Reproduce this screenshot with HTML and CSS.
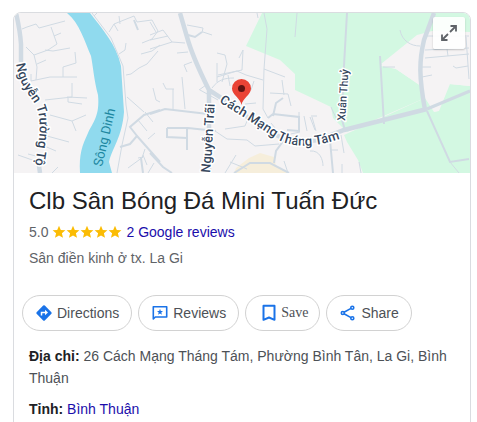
FILE: index.html
```
<!DOCTYPE html>
<html lang="vi">
<head>
    <meta charset="UTF-8">
    <meta name="viewport" content="width=device-width, initial-scale=1.0">
    <title>Clb Sân Bóng Đá Mini Tuấn Đức</title>
    <link rel="stylesheet" href="styles.css">
</head>
<body>
    <div class="card">
        <div class="map">
            <svg class="map-img" viewBox="14 13 456 160" preserveAspectRatio="xMidYMid slice" role="img" aria-label="Map">
                <rect x="14" y="13" width="456" height="160" fill="#f5f3f4"/>
                <!-- parks -->
                <g fill="#d3f8e2">
                    <path d="M262 13H470V36H430L417 48 383 63 381 66 396 69 421 86 425 98 347 132 333 118 331 107 310 97 295 90V74L280 60 246 46Z"/>
                    <path d="M344 135L425 98 436 112 449 84 470 86V173H363L358 160 347 142Z"/>
                </g>
                <path d="M421 86L396 69 381 64 417 35 432 31 470 32V86L450 84 439 111 434 112 425 98Z" fill="#f5f3f4"/>
                <path d="M234 173L236 168 249 158 260 153 274 157 276 166 288 173Z" fill="#f6eedb"/>
                <!-- river -->
                <path d="M67 13C80 24 84 40 91 56C93 66 94 80 98 95C100 116 93 122 88 133C82 146 79 154 80 173H112L109 162C112 148 122 138 124 112L121 66C116 44 103 30 90 13Z" fill="#90daee"/>
                <!-- small streets -->
                <g class="street">
                    <path d="M22 29L27 27 36 24 39 28 50 25 65 21M51 27L57 44 48 50 34 55 26 47M54 36L61 33M45 50L53 51 70 48M34 55L37 67 36 80M37 64L46 60M31 74V81L50 77 77 77M63 77V67L76 63 75 52M72 83V97L45 100M67 97L87 98M68 98V102L82 104M50 115L72 121 86 115M72 121L76 131M47 136L69 142M42 145L56 151M28 154L40 157M18 155L38 162M52 173L58 167"/>
                    <path d="M92 13L111 38 123 66 126 105 128 118 122 145 117 173M97 13L94 16M109 32L114 24 134 16 137 22 152 20 158 31 152 39 142 43M114 24L118 31M119 16L120 24M126 43L125 50 119 54M126 75L131 74 139 68 147 64 158 51M141 54L152 51 160 45M127 97L144 112M145 112L153 122M138 120L147 131M148 139L155 133M153 88L156 100 160 102M128 168L143 157 138 158M148 173L154 163M142 158L145 149M143 155L147 165"/>
                    <path d="M150 35L163 30 172 42 185 43M150 49L172 42M150 40L168 36M150 22L156 32M187 25L203 28 202 33M203 32L212 35M177 53L188 52M187 72L184 65 192 62M199 90L206 85M212 88C218 80 224 78 234 78M217 53L225 55 227 64 222 82M218 75L242 70 243 50M217 82V63M217 77L237 71 246 75 263 80M230 86L228 75M254 81L251 90M243 50L239 58M257 13L258 18M264 13L267 29 264 69 263 109 268 118M264 69L285 77M297 13L295 37M173 89V110M163 83L166 89 174 89M182 77L185 109M200 90L218 100M245 104L256 103M225 129L245 126 249 116M215 131L227 139 247 140 255 146 279 144M225 173L236 155M270 93L288 94 291 106M282 80L284 95M271 123L279 133M281 136L300 132M299 118V112M304 116L307 131M310 117L315 130M230 162L247 169M288 173L284 161"/>
                    <path d="M400 30C402 41 411 46 420 46M425 50L446 49 469 48M425 58L469 54M425 36H469M447 49L448 56M422 67H431M422 77L432 75M453 66L456 68 468 66M466 37L469 79M383 67H395M331 107L336 118M341 135L344 153M311 116H317M312 117L316 131M330 150H338M342 164V173M310 151C320 150 323 160 323 166M361 173L359 162M450 162L459 173"/>
                </g>
                <!-- medium streets -->
                <g class="street mid">
                    <path d="M160 110L144 115 130 127 137 136 130 144 120 147M137 136L160 162M141 158L143 173M134 20L138 30"/>
                    <path d="M150 114L165 109 208 114M167 128L188 128 216 131M167 128V137L187 138M187 128V150M188 35L195 37 202 32M150 153L163 167 172 173M273 116L276 103 283 98M268 118L273 114 299 117V131L287 130M274 163L276 151 284 140M234 173L250 163 270 163 289 173"/>
                    <path d="M380 56L384 124M347 13L343 83 342 120 345 130M427 111L450 162 469 159M330 140L333 173"/>
                </g>
                <!-- main roads -->
                <g class="road">
                    <path d="M16 13C18 22 20 30 21 44V62M38 158L40 173"/>
                    <path d="M180 13L187 37C192 55 199 70 209 90V173M209 90L220 97 250 119C276 137 290 145 318 140L344 130 427 109M434 13L424 40C419 61 419 77 425 110"/>
                    <path class="thin" d="M427 109L470 91"/>
                </g>
                <!-- street names -->
                <defs>
                    <path id="p1" d="M16 64C19 84 28 93 35 104C43 118 39 140 35 165"/>
                    <path id="p2" d="M102 167L116 107"/>
                    <path id="p3" d="M210 173L212 150Q213 130 215 100"/>
                    <path id="p4" d="M219 102L248 120 272 136Q298 155 345 137"/>
                    <path id="p5" d="M345 121L349 64"/>
                </defs>
                <g class="label">
                    <text><textPath href="#p1">Nguyễn Trường Tộ</textPath></text>
                    <text class="water"><textPath href="#p2">Sông Dinh</textPath></text>
                    <text><textPath href="#p3">Nguyễn Trãi</textPath></text>
                    <text><textPath href="#p4">Cách Mạng Tháng Tám</textPath></text>
                    <text class="minor"><textPath href="#p5">Xuân Thuỷ</textPath></text>
                </g>
                <!-- pin -->
                <path d="M241.500 105C240.500 98 232 95 232 88.500A9.500 9.500 0 0 1 251 88.500C251 95 242.500 98 241.500 105Z" fill="#ea4335"/>
                <circle cx="241.500" cy="88.500" r="3.500" fill="#5f1311"/>
            </svg>
            <button class="expand" aria-label="Expand map">
                <svg width="18" height="18" viewBox="0 0 18 18" fill="none" stroke="#5f6368" stroke-width="1.800">
                    <path d="M10.500 2H16V7.500M16 2L10 8M2 10.500V16H7.500M2 16L8 10"/>
                </svg>
            </button>
        </div>

        <div class="info">
            <h2>Clb Sân Bóng Đá Mini Tuấn Đức</h2>
            <div class="rating">
                <span>5.0</span>
                <svg class="stars" width="70" height="14" viewBox="0 0 70 14" fill="#fbbc04" role="img" aria-label="5 stars">
                    <defs><path id="star" d="M7 .8L8.800 5 13.400 5.300 9.900 8.300 11 12.800 7 10.400 3 12.800 4.100 8.300 .6 5.300 5.200 5Z"/></defs>
                    <use href="#star"/>
                    <use href="#star" x="14"/>
                    <use href="#star" x="28"/>
                    <use href="#star" x="42"/>
                    <use href="#star" x="56"/>
                </svg>
                <a href="#">2 Google reviews</a>
            </div>
            <p class="category">Sân điền kinh ở tx. La Gi</p>
        </div>

        <div class="actions">
            <button>
                <svg width="16" height="16" viewBox="0 0 16 16">
                    <path d="M7.200 .6Q8 0 8.800 .6L15.400 7.200Q16 8 15.400 8.800L8.800 15.400Q8 16 7.200 15.400L.6 8.800Q0 8 .6 7.200Z" fill="#1a73e8"/>
                    <path d="M5.500 10.500V7.500H10" fill="none" stroke="#fff" stroke-width="1.500"/>
                    <path d="M9 4.800L12 7.500 9 10.200Z" fill="#fff"/>
                </svg>
                Directions
            </button>
            <button>
                <svg width="16" height="16" viewBox="0 0 16 16">
                    <path d="M1.300 14V1.700H14.700V12H3.300Z" fill="none" stroke="#1a73e8" stroke-width="1.600" stroke-linejoin="round"/>
                    <path d="M8 3.800L8.800 6 11 6.100 9.300 7.500 9.900 9.700 8 8.500 6.100 9.700 6.700 7.500 5 6.100 7.200 6Z" fill="#1a73e8"/>
                </svg>
                Reviews
            </button>
            <button class="save">
                <svg width="14" height="18" viewBox="0 0 14 18" fill="none" stroke="#1a73e8" stroke-width="2">
                    <path d="M1.500 1.800H12.500V15.800L7 13.500 1.500 15.800Z" stroke-linejoin="round"/>
                </svg>
                Save
            </button>
            <button class="share">
                <svg width="16" height="16" viewBox="0 0 16 16" fill="none" stroke="#1a73e8" stroke-width="1.600">
                    <path d="M4 7.300L11 3.400M4 8.700L11 12.600"/>
                    <circle cx="2.800" cy="8" r="1.500"/>
                    <circle cx="12.300" cy="2.700" r="1.500"/>
                    <circle cx="12.300" cy="13.300" r="1.500"/>
                </svg>
                Share
            </button>
        </div>

        <div class="facts">
            <p><strong>Địa chỉ:</strong> 26 Cách Mạng Tháng Tám, Phường Bình Tân, La Gi, Bình Thuận</p>
            <p><strong>Tỉnh:</strong> <a href="#">Bình Thuận</a></p>
        </div>
    </div>
</body>
</html>
```
FILE: styles.css
```
html {
    scrollbar-width: none;
}
body {
    margin: 0;
    padding: 12px 6px 0 13px;
    background: #fff;
    color: #4d5156;
    font-family: "Liberation Sans", Arial, sans-serif;
    font-size: 14px;
}
a {
    color: #1a0dab;
    text-decoration: none;
}
.card {
    border: 1px solid #dadce0;
    border-radius: 8px;
    overflow: hidden;
}
.map {
    position: relative;
    height: 160px;
}
.map-img {
    display: block;
    width: 100%;
    height: 100%;
}
.street {
    fill: none;
    stroke: #d0dae3;
    stroke-width: 1;
}
.mid {
    stroke-width: 2;
}
.road {
    fill: none;
    stroke: #d0dae3;
    stroke-width: 4.5;
}
.road .thin {
    stroke-width: 3;
}
.label {
    font-family: Roboto, sans-serif;
    font-size: 13px;
    font-weight: 500;
    fill: #35465c;
    stroke: #fff;
    stroke-width: 3;
    stroke-linejoin: round;
    paint-order: stroke;
}
.label .water {
    fill: #1d87a0;
    stroke: none;
    font-weight: 400;
}
.label .minor {
    font-size: 11px;
}
.expand {
    position: absolute;
    top: 4px;
    right: 5px;
    display: flex;
    align-items: center;
    justify-content: center;
    width: 32px;
    height: 32px;
    padding: 0;
    border: 0;
    border-radius: 2px;
    background: rgba(255, 255, 255, 0.9);
    box-shadow: 0 1px 2px rgba(0, 0, 0, 0.2);
}
.info {
    padding: 12px 15px 0;
}
h2 {
    margin: 0;
    color: #202124;
    font-size: 24px;
    font-weight: 400;
    line-height: 32px;
}
.rating {
    display: flex;
    align-items: center;
    gap: 4px;
    margin-top: 4px;
    color: #5f6368;
    line-height: 22px;
}
.category {
    margin: 4px 0 0;
    color: #5f6368;
    line-height: 22px;
}
.actions {
    display: flex;
    gap: 6px;
    margin-top: 26px;
    padding: 0 8px;
}
.actions button {
    display: flex;
    align-items: center;
    gap: 5px;
    height: 36px;
    padding: 0 12px 0 13px;
    border: 1px solid #d2d2d2;
    border-radius: 18px;
    background: #fff;
    color: #4d5156;
    font-family: inherit;
    font-size: 14px;
}
.actions .save {
    padding: 0 11px 0 16px;
    font-family: "Liberation Serif", "Times New Roman", serif;
}
.actions .share {
    padding: 0 12px 0 13px;
}
.facts {
    padding: 14px 15px 0;
    line-height: 22px;
}
.facts p {
    margin: 0 0 9px;
}
.facts strong {
    color: #202124;
}
```
